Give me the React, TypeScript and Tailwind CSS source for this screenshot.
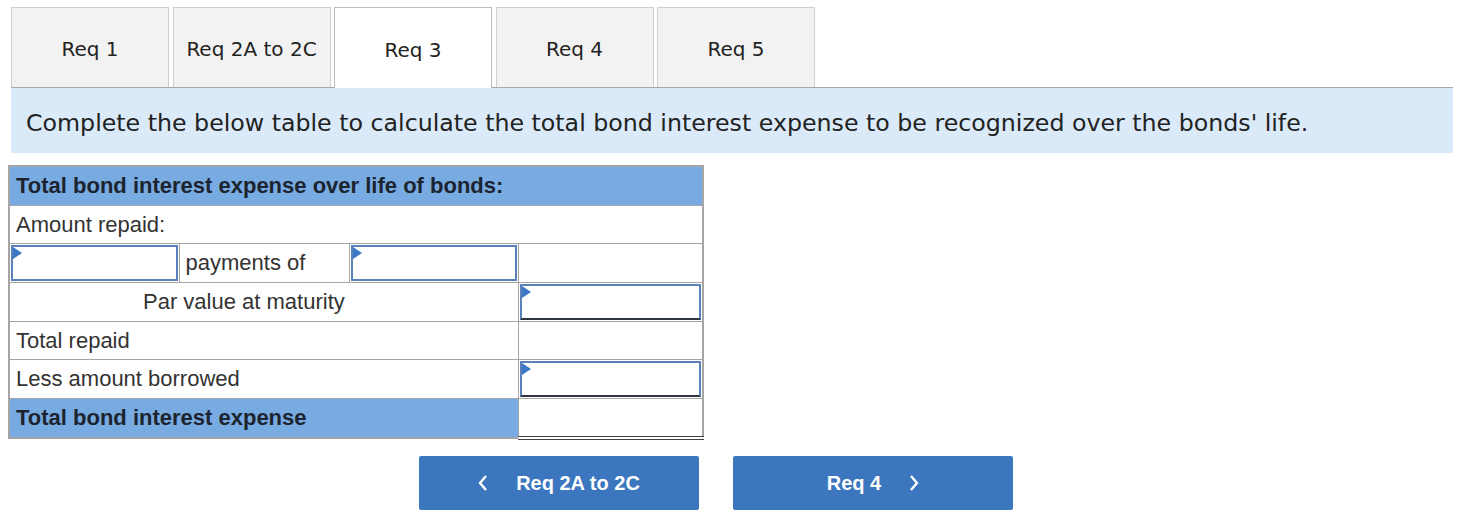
import React from 'react'

const tabs = ['Req 1', 'Req 2A to 2C', 'Req 3', 'Req 4', 'Req 5']

// small blue flag in the corner of an answer cell
const Flag = () => (
    <svg className="absolute left-0 top-0" width="9" height="12" viewBox="0 0 9 12">
        <polygon points="0,0 9,6 0,12" fill="#3b78c6" />
    </svg>
)

const InputBox = ({ underline }: { underline?: boolean }) => (
    <div
        className={
            underline
                ? 'relative h-full w-full border-2 border-[#5b82b8] border-b-[#2f3640] bg-white'
                : 'relative h-full w-full border-2 border-[#5b82b8] bg-white'
        }
    >
        <Flag />
    </div>
)

export default function App() {
    return (
        <div className="min-h-[526px] w-[1477px] bg-white font-['Liberation_Sans',Arial,sans-serif] text-[#333]">
            {/* tabs */}
            <div className="ml-[11px] mr-[24px] pt-[7px]">
                <div className="flex gap-[3.5px] border-b border-[#a8a8a8]">
                    {tabs.map((t) => (
                        <div
                            key={t}
                            className={
                                t === 'Req 3'
                                    ? 'mb-[-1px] flex h-[81px] w-[158px] items-center justify-center border border-b-0 border-[#bdbdbd] bg-white pt-[3px] font-["DejaVu_Sans",Verdana,sans-serif] text-[20px] text-[#222]'
                                    : 'flex h-[80px] w-[158px] items-center justify-center border border-b-0 border-[#cfcfcf] bg-[#f2f2f2] pt-[3px] font-["DejaVu_Sans",Verdana,sans-serif] text-[20px] text-[#222]'
                            }
                        >
                            {t}
                        </div>
                    ))}
                </div>
                <div className="flex h-[65px] items-center bg-[#dbeaf8] px-[15px] pt-[6px] font-['DejaVu_Sans',Verdana,sans-serif] text-[23.7px] text-[#222]">
                    Complete the below table to calculate the total bond interest expense to be recognized over the bonds' life.
                </div>
            </div>

            {/* table */}
            <table className="ml-[8px] mt-[12px] w-[694px] table-fixed border-collapse border-2 border-[#a5a5a5] text-[22px]">
                <colgroup>
                    <col className="w-[170px]" />
                    <col className="w-[170px]" />
                    <col className="w-[169px]" />
                    <col className="w-[185px]" />
                </colgroup>
                <tbody>
                    <tr className="h-[39px] bg-[#78abe1]">
                        <td colSpan={4} className="border border-[#a5a5a5] px-[6px] font-bold text-[#1c2430]">
                            Total bond interest expense over life of bonds:
                        </td>
                    </tr>
                    <tr className="h-[38px]">
                        <td colSpan={4} className="border border-[#a5a5a5] px-[6px]">
                            Amount repaid:
                        </td>
                    </tr>
                    <tr className="h-[39px]">
                        <td className="h-[39px] border border-[#a5a5a5] p-[1px]">
                            <InputBox />
                        </td>
                        <td className="border border-[#a5a5a5] px-[6px]">payments of</td>
                        <td className="h-[39px] border border-[#a5a5a5] p-[1px]">
                            <InputBox />
                        </td>
                        <td className="border border-[#a5a5a5]"></td>
                    </tr>
                    <tr className="h-[39px]">
                        <td colSpan={3} className="border border-[#a5a5a5] pl-[133px]">
                            Par value at maturity
                        </td>
                        <td className="h-[39px] border border-[#a5a5a5] p-[1px]">
                            <InputBox underline />
                        </td>
                    </tr>
                    <tr className="h-[38px]">
                        <td colSpan={3} className="border border-[#a5a5a5] px-[6px]">
                            Total repaid
                        </td>
                        <td className="border border-[#a5a5a5]"></td>
                    </tr>
                    <tr className="h-[39px]">
                        <td colSpan={3} className="border border-[#a5a5a5] px-[6px]">
                            Less amount borrowed
                        </td>
                        <td className="h-[39px] border border-[#a5a5a5] p-[1px]">
                            <InputBox underline />
                        </td>
                    </tr>
                    <tr className="h-[40px]">
                        <td colSpan={3} className="border border-[#a5a5a5] bg-[#78abe1] px-[6px] font-bold text-[#1c2430]">
                            Total bond interest expense
                        </td>
                        <td className="border border-[#a5a5a5] border-b-[4px] border-b-[#444] [border-bottom-style:double] bg-white"></td>
                    </tr>
                </tbody>
            </table>

            {/* prev / next */}
            <div className="mt-[16px] flex gap-[34px] pl-[419px]">
                <button className="flex h-[54px] w-[280px] items-center justify-center gap-[28px] rounded-[2px] bg-[#3b76be] text-[20px] font-bold text-white">
                    <svg width="10" height="16" viewBox="0 0 10 16">
                        <polyline points="8,1 2,8 8,15" fill="none" stroke="white" strokeWidth="2.4" />
                    </svg>
                    <span>Req 2A to 2C</span>
                </button>
                <button className="flex h-[54px] w-[280px] items-center justify-center gap-[28px] rounded-[2px] bg-[#3b76be] text-[20px] font-bold text-white">
                    <span>Req 4</span>
                    <svg width="10" height="16" viewBox="0 0 10 16">
                        <polyline points="2,1 8,8 2,15" fill="none" stroke="white" strokeWidth="2.4" />
                    </svg>
                </button>
            </div>
        </div>
    )
}
